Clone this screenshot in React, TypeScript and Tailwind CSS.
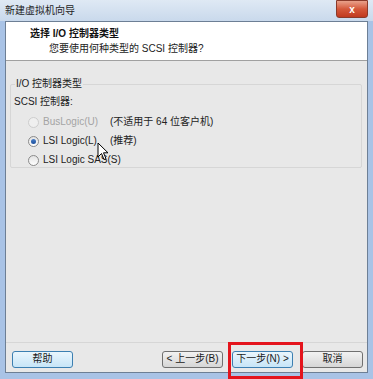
const font = {
  fontFamily: '"Liberation Sans", "Noto Sans CJK SC", sans-serif',
};

const Radio = ({ checked, disabled }: any) => (
  <span
    className={`w-[11px] h-[11px] rounded-full border flex items-center justify-center ${
      disabled ? "border-[#cdcdcd] bg-[#efefef]" : "border-[#8a8a8a] bg-gradient-to-b from-[#e2e2e2] to-[#ffffff]"
    }`}
  >
    {checked && <span className="w-[5px] h-[5px] rounded-full bg-gradient-to-b from-[#4a7fc8] to-[#1c4f9c]" />}
  </span>
);

const Btn = ({ children, primary }: any) => (
  <button
    className={`w-[61px] h-[17px] rounded-[3px] border text-[10px] leading-none text-[#1a1a1a] flex items-center justify-center ${
      primary
        ? "border-[#3c7fb1] bg-gradient-to-b from-[#eaf6fd] to-[#c7e5f7]"
        : "border-[#707070] bg-gradient-to-b from-[#f2f2f2] to-[#d6d6d6]"
    }`}
  >
    {children}
  </button>
);

export default function App() {
  return (
    <div style={font} className="relative w-[373px] h-[379px] overflow-hidden bg-[#a9c3e6] flex flex-col">
      {/* title bar */}
      <div className="h-[21px] flex items-center justify-between bg-gradient-to-b from-[#dfe9f4] to-[#c9d9ec] pl-[5px] pr-[5px]">
        <span className="text-[10px] text-[#1e1e1e]">新建虚拟机向导</span>
        <div className="w-[32px] h-[18px] -mt-[3px] rounded-b-[3px] border border-[#8a3a2a] bg-gradient-to-b from-[#e8a08a] via-[#d4583a] to-[#c0391f] flex items-center justify-center text-white text-[10px] font-bold">
          x
        </div>
      </div>

      <div className="flex-1 mx-[5px] border border-[#6d7f95] flex flex-col bg-[#e8e8e8]">
        {/* header */}
        <div className="h-[39px] bg-white border-b border-[#a0a0a0] pl-[24px] pt-[5px]">
          <div className="text-[10px] font-bold text-[#111] leading-[14px]">选择 I/O 控制器类型</div>
          <div className="text-[10px] text-[#222] leading-[14px] pl-[19px] mt-[1px]">您要使用何种类型的 SCSI 控制器?</div>
        </div>

        {/* body */}
        <div className="flex-1 flex pl-[10px] pr-[5px]">
          <div className="w-[8px] bg-[#ececec]" />
          <div className="flex-1 pt-[23px]">
            <div className="relative border border-[#d6d6d6] rounded-[2px] h-[84px] w-[352px] -ml-[6px]">
              <div className="absolute -top-[8px] left-[4px] bg-[#e8e8e8] px-[1px] text-[10px] leading-[14px] text-[#222]">
                I/O 控制器类型
              </div>
              <div className="pt-[10px] pl-[3px] text-[10px] text-[#222] leading-[14px]">SCSI 控制器:</div>
              <div className="mt-[6px] pl-[17px] flex flex-col gap-[5px] text-[10px] leading-[14px]">
                <div className="flex items-center">
                  <Radio disabled />
                  <span className="ml-[4px] w-[67px] text-[#a4a4a4]">BusLogic(U)</span>
                  <span className="text-[#222]">(不适用于 64 位客户机)</span>
                </div>
                <div className="flex items-center">
                  <Radio checked />
                  <span className="ml-[4px] w-[67px] text-[#222]">LSI Logic(L)</span>
                  <span className="text-[#222]">(推荐)</span>
                </div>
                <div className="flex items-center">
                  <Radio />
                  <span className="ml-[4px] text-[#222]">LSI Logic SAS(S)</span>
                </div>
              </div>
            </div>
          </div>
        </div>

        {/* buttons */}
        <div className="h-[30px] border-t border-[#d6d6d6] flex items-center pt-[3px] pl-[6px] pr-[4px]">
          <Btn primary>帮助</Btn>
          <div className="flex-1" />
          <div className="flex gap-[9px]">
            <Btn>&lt; 上一步(B)</Btn>
            <Btn primary>下一步(N) &gt;</Btn>
            <Btn>取消</Btn>
          </div>
        </div>
      </div>
      <div className="h-[6px]" />

      {/* annotation highlight */}
      <div className="absolute left-[228px] top-[342px] w-[75px] h-[37px] border-[3px] border-[#e4141c]" />

      {/* mouse cursor */}
      <svg className="absolute left-[97px] top-[142px]" width="12" height="19" viewBox="0 0 12 19">
        <path d="M1 1 L1 15 L4.5 11.5 L7 17.5 L9 16.6 L6.5 10.8 L11 10.8 Z" fill="#fff" stroke="#000" strokeWidth="1" />
      </svg>
    </div>
  );
}
